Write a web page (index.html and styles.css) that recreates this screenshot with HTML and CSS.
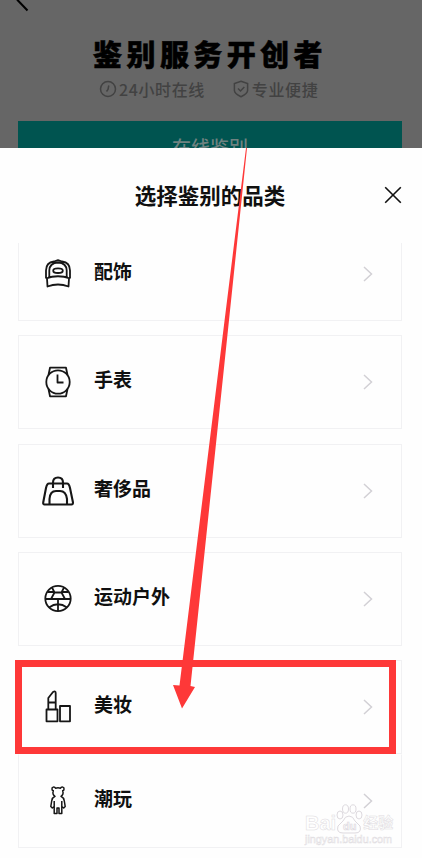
FILE: index.html
```html
<!DOCTYPE html>
<html lang="zh-CN">
<head>
<meta charset="utf-8">
<title>选择鉴别的品类</title>
<link rel="stylesheet" href="styles.css">
</head>
<body>
<div class="screen">
  <header class="hero">
    <svg class="back" viewBox="0 0 14 14"><path d="M1.500-2 L1.500 0 L11.500 10.500"/></svg>
    <h1 class="hero-title">鉴别服务开创者</h1>
    <div class="perks">
      <span class="perk"><svg class="perk-icon" viewBox="0 0 18 18"><circle cx="9" cy="9" r="7.500"/><path d="M9.800 5.500 9 9.500 7.500 11.500"/></svg>24小时在线</span>
      <span class="perk"><svg class="perk-icon" viewBox="0 0 18 18"><path d="M9 1.300 15.600 3.500V10.500Q15.600 13.700 9 16.700 2.400 13.700 2.400 10.500V3.500ZM6 8.500 8.500 11 12.300 7"/></svg>专业便捷</span>
    </div>
    <div class="cta">在线鉴别</div>
  </header>
  <main class="sheet">
    <div class="sheet-head">
      <h2 class="sheet-title">选择鉴别的品类</h2>
      <svg class="close" viewBox="0 0 18 18"><path d="M1.200 1.200 16.800 16.800M16.800 1.200 1.200 16.800"/></svg>
    </div>
    <div class="list">
      <div class="card first">
        <svg class="icon" viewBox="0 0 34 34"><path d="M5 21.500V13.500Q5 5.500 13 4.500L17 3.200 21 4.500Q29 5.500 29 13.500V21.500M5 21.500Q17 17 29 21.500M8.300 20V13.500Q8.500 6 17 5.500 25.500 6 25.700 13.500V20M6 21.500 6.500 29.500Q17 25.500 27.500 29.500L28 21.500"/><ellipse cx="17" cy="13.700" rx="4.800" ry="2.300"/></svg>
        <span class="label">配饰</span><svg class="chevron" viewBox="0 0 10 16"><path d="M1 1 8.500 8 1 15"/></svg>
      </div>
      <div class="card">
        <svg class="icon" viewBox="0 0 34 34"><circle cx="17" cy="17" r="11.700"/><path d="M7.500 10 9 2.700H25L26.500 10M7.500 24 9 31.300H25L26.500 24M16.500 9.500V17.500H22.500"/></svg>
        <span class="label">手表</span><svg class="chevron" viewBox="0 0 10 16"><path d="M1 1 8.500 8 1 15"/></svg>
      </div>
      <div class="card">
        <svg class="icon bold" viewBox="0 0 34 34"><path d="M8 9.500H26Q28 9.500 29 14L32 28.500Q32 30.500 30.500 30.500H3.500Q2 30.500 2.200 28.500L5 14Q6 9.500 8 9.500ZM12 14V8.500Q12 3.500 17 3.500T22 8.500V14M8.500 30V25Q9 17 15 17H19Q25 17 26 25V30"/></svg>
        <span class="label">奢侈品</span><svg class="chevron" viewBox="0 0 10 16"><path d="M1 1 8.500 8 1 15"/></svg>
      </div>
      <div class="card">
        <svg class="icon" viewBox="0 0 34 34"><circle cx="17" cy="16.500" r="12.700"/><path d="M4.500 17H29.500M11 5.500 13.500 10.500H20.500L23 5.500M13.500 10.500 10 17M20.500 10.500 24 17M6.500 10H13.500M27.500 10H20.500M17 17V29M8 25.500Q17 19 26 25.500"/></svg>
        <span class="label">运动户外</span><svg class="chevron" viewBox="0 0 10 16"><path d="M1 1 8.500 8 1 15"/></svg>
      </div>
      <div class="card">
        <svg class="icon" viewBox="0 0 34 34"><path d="M5.500 19.500H16.500V31.300H5.500ZM19 16H29V31.300H19ZM7.300 19V12.500H14.700V19M7.300 12.500V8L12 2Q14.700 .5 14.700 3V12.500"/></svg>
        <span class="label">美妆</span><svg class="chevron" viewBox="0 0 10 16"><path d="M1 1 8.500 8 1 15"/></svg>
      </div>
      <div class="card joined">
        <svg class="icon thin" viewBox="0 0 34 34"><path d="M14.500 4.200C13.500 2.200 10.500 3 11 5.200 11 6 11.500 6.500 12.300 6.800 11.500 9 12 11 14 12.300 11.500 13.500 11 15 10.700 17L9.800 22.500 11.300 24 13.200 22.500V29.500H16V24H18V29.500H20.800V22.500L22.700 24 24.200 22.500 23.300 17C23 15 22.500 13.500 20 12.300 22 11 22.500 9 21.700 6.800 22.500 6.500 23 6 23 5.200 23.500 3 20.500 2.200 19.500 4.200Q17 3.400 14.500 4.200ZM13.200 17V22.500M20.800 17V22.500"/></svg>
        <span class="label">潮玩</span><svg class="chevron" viewBox="0 0 10 16"><path d="M1 1 8.500 8 1 15"/></svg>
      </div>
    </div>
  </main>
  <div class="highlight"></div>
  <svg class="arrow" viewBox="0 0 422 858"><path d="M246 148 247 148 228.500 325 190.500 686 195 687 182 708.500 173 685 179.500 685.500 224 325Z"/></svg>
  <div class="watermark">
    <div class="brand"><span>Bai</span><svg class="paw" viewBox="0 0 28 30"><ellipse cx="5" cy="11" rx="3" ry="4"/><ellipse cx="10.500" cy="5" rx="3" ry="4.200"/><ellipse cx="18" cy="5" rx="3" ry="4.200"/><ellipse cx="24" cy="11" rx="3" ry="4"/><path d="M14 12Q18 12 20 17L25 22Q27 29 20 29H8Q1 29 3 22L8 17Q10 12 14 12Z"/><text x="8" y="26">du</text></svg><span class="brand-cn">经验</span></div>
    <div class="site">jingyan.baidu.com</div>
  </div>
</div>
</body>
</html>
```
FILE: styles.css
```css
* { box-sizing: border-box; }
body { margin: 0; background: #fefefe; font-family: "Noto Sans CJK SC", sans-serif; color: #101010; }
svg { fill: none; flex: none; }
.screen { position: relative; width: 422px; height: 858px; overflow: hidden; display: flex; flex-direction: column; }
.hero { height: 148px; flex: none; overflow: hidden; background: #666; display: flex; flex-direction: column; padding: 0 20px 0 18px; }
.back { width: 14px; height: 14px; margin-left: -2px; stroke: #000; stroke-width: 2; }
.hero-title { margin: 19px 0 0; height: 40px; line-height: 40px; text-align: center; font-size: 29px; font-weight: 900; letter-spacing: 4.400px; color: #000; -webkit-text-stroke: .5px #000; white-space: nowrap; }
.perks { display: flex; gap: 27px; margin: 5px 0 0 81px; height: 22px; }
.perk { display: flex; align-items: center; gap: 2px; font-size: 16px; line-height: 22px; letter-spacing: .600px; color: #424242; font-weight: 500; white-space: nowrap; }
.perk-icon { width: 18px; height: 18px; stroke: #424242; stroke-width: 1.500; }
.cta { margin-top: 21px; height: 50px; flex: none; background: #005450; color: #6f8280; text-align: center; font-size: 19px; font-weight: 500; line-height: 51px; }
.sheet { flex: 1; min-height: 0; background: #fefefe; padding: 0 20px 0 18px; }
.sheet-head { height: 95px; padding-bottom: 2px; display: grid; grid-template-columns: 18px 1fr 18px; align-items: center; }
.sheet-title { grid-column: 2; margin: 0; text-align: center; font-size: 21.500px; font-weight: 700; line-height: 30px; white-space: nowrap; }
.close { width: 18px; height: 18px; stroke: #111; stroke-width: 1.600; }
.list { height: 606px; overflow: hidden; display: flex; flex-direction: column; gap: 14.300px; }
.card { height: 94px; flex: none; border: 1px solid #f1f1f3; display: flex; align-items: flex-start; padding: 29px 28px 0 22px; }
.first { margin-top: -16px; }
.joined { margin-top: -14.300px; border-top-color: transparent; }
.icon { width: 34px; height: 34px; stroke: #161616; stroke-width: 1.800; stroke-linejoin: round; }
.bold { stroke-width: 2.100; }
.thin { stroke-width: 1.500; }
.label { flex: 1; margin: 0 0 0 19px; font-size: 19px; font-weight: 700; line-height: 28px; }
.chevron { width: 10px; height: 16px; margin-top: 9px; stroke: #d2d0d5; stroke-width: 1.500; }
.highlight { position: absolute; left: 15px; top: 660px; width: 381px; height: 94px; border: 7px solid #fe3838; }
.arrow { position: absolute; left: 0; top: 0; width: 422px; height: 858px; fill: #fe3838; }
.watermark { position: absolute; left: 305px; top: 803px; width: 92px; color: #fff; -webkit-text-stroke: .5px #e0dce1; }
.brand { display: flex; align-items: flex-end; height: 31px; font: 700 20px/22px "Liberation Sans", "Noto Sans CJK SC", sans-serif; }
.paw { width: 28px; height: 30px; margin-left: -1px; stroke: #ddd9de; stroke-width: 1; }
.paw text { font: 700 11px "Liberation Sans", sans-serif; fill: #fff; stroke-width: .7; }
.brand-cn { font-size: 15px; white-space: nowrap; }
.site { font: 10.800px/11px "Liberation Sans", sans-serif; white-space: nowrap; }
```
